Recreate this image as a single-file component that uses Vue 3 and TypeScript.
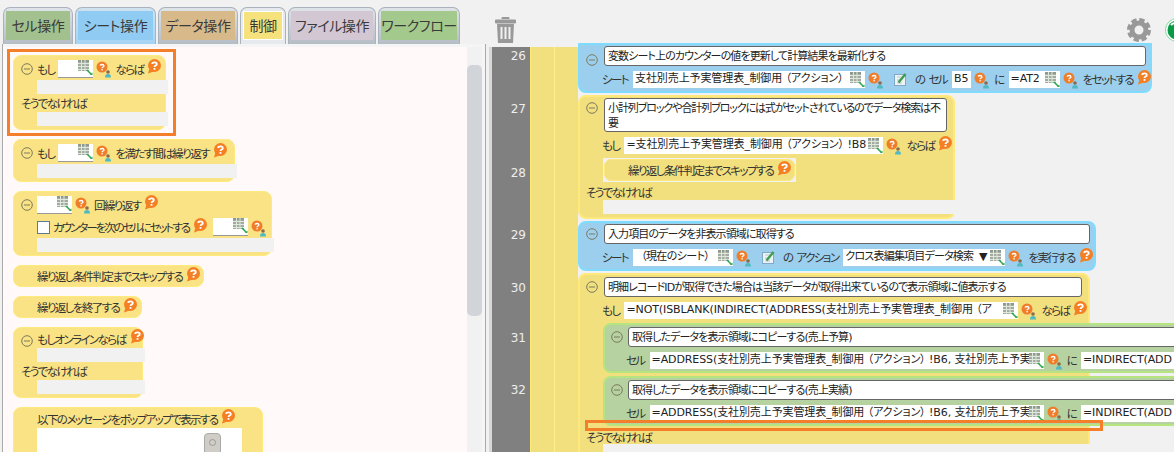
<script setup lang="ts">
const rows: { n: number; h: number }[] = [
  { n: 26, h: 53 },
  { n: 27, h: 64 },
  { n: 28, h: 62 },
  { n: 29, h: 53 },
  { n: 30, h: 50 },
  { n: 31, h: 52 },
  { n: 32, h: 80 },
];
</script>

<template>
  <div class="app">
    <svg class="defs" width="0" height="0" aria-hidden="true">
      <defs>
        <symbol id="grid" viewBox="0 0 15 16">
          <rect x="0" y="0" width="11" height="11" fill="#a3aaa0" />
          <rect x="0" y="0" width="11" height="2" fill="#8f9a8e" />
          <path d="M0 3.5h11M0 6.5h11M0 9.5h11M3.5 0v11M7 0v11" stroke="#dfe8dc" stroke-width="1" />
          <path d="M9 10l4.5 4.5" stroke="#2fa84f" stroke-width="1.6" />
          <path d="M14.5 12.5v2.5h-2.5z" fill="#2fa84f" />
        </symbol>
        <symbol id="q" viewBox="0 0 16 17">
          <circle cx="6" cy="6" r="5.5" fill="#f07d2a" />
          <path d="M4.2 4.6C4.3 3.2 7.9 3 7.9 4.9 7.9 6 6.1 6 6.1 7.2" fill="none" stroke="#fff" stroke-width="1.4" />
          <rect x="5.4" y="8.1" width="1.4" height="1.3" fill="#fff" />
          <circle cx="12" cy="11" r="1.8" fill="#8a6a4a" />
          <path d="M9 16.5c0-2.5 1-3.5 3-3.5s3 1 3 3.5z" fill="#4fb9c4" />
        </symbol>
        <symbol id="help" viewBox="0 0 14 15">
          <circle cx="7.5" cy="6.5" r="6.5" fill="#f47f24" />
          <path d="M1 14.5L3 8l5 4z" fill="#f47f24" />
          <path d="M5.2 5C5.3 3 9.8 2.8 9.8 5.2 9.8 6.6 7.5 6.6 7.5 8" fill="none" stroke="#fff" stroke-width="1.8" />
          <rect x="6.6" y="9" width="1.8" height="1.8" fill="#fff" />
        </symbol>
        <symbol id="minus" viewBox="0 0 12 12">
          <circle cx="6" cy="6" r="5.3" fill="none" stroke="#7d7a60" stroke-width="1" />
          <path d="M3 6h6" stroke="#7d7a60" stroke-width="1" />
        </symbol>
        <symbol id="check" viewBox="0 0 13 13">
          <rect x="0.5" y="1.5" width="11" height="11" fill="#eef3f6" stroke="#7fa8c9" />
          <path d="M3 4h5M3 7h3M3 10h5" stroke="#b9c7cf" stroke-width="1" />
          <path d="M4.5 9.5L11.5 1" fill="none" stroke="#3f9d50" stroke-width="2.4" />
        </symbol>
      </defs>
    </svg>

    <section class="left">
      <nav class="tabs">
        <div class="tab"><span class="face t-cell">セル操作</span></div>
        <div class="tab tab-blue"><span class="face t-sheet">シート操作</span></div>
        <div class="tab"><span class="face t-data">データ操作</span></div>
        <div class="tab tab-active"><span class="face t-ctrl">制御</span></div>
        <div class="tab"><span class="face t-file">ファイル操作</span></div>
        <div class="tab"><span class="face t-flow">ワークフロー</span></div>
      </nav>
      <div class="panel">
        <div class="palette">
          <div class="pb w153">
            <div class="pr">
              <svg class="tg"><use href="#minus" /></svg>
              <span>もし</span>
              <span class="pi"><svg class="gi"><use href="#grid" /></svg></span>
              <svg class="qi"><use href="#q" /></svg>
              <span>ならば</span>
              <svg class="hi"><use href="#help" /></svg>
            </div>
            <div class="strip"></div>
            <div class="else">そうでなければ</div>
            <div class="strip"></div>
          </div>
          <div class="pb w222">
            <div class="pr">
              <svg class="tg"><use href="#minus" /></svg>
              <span>もし</span>
              <span class="pi"><svg class="gi"><use href="#grid" /></svg></span>
              <svg class="qi"><use href="#q" /></svg>
              <span>を満たす間は繰り返す</span>
              <svg class="hi"><use href="#help" /></svg>
            </div>
            <div class="strip"></div>
          </div>
          <div class="pb w259">
            <div class="pr">
              <svg class="tg"><use href="#minus" /></svg>
              <span class="pi nom"><svg class="gi"><use href="#grid" /></svg></span>
              <svg class="qi"><use href="#q" /></svg>
              <span>回繰り返す</span>
              <svg class="hi"><use href="#help" /></svg>
            </div>
            <div class="pr pr2">
              <span class="box"></span>
              <span class="tight">カウンターを次のセルにセットする</span>
              <svg class="hi"><use href="#help" /></svg>
              <span class="pi nom"><svg class="gi"><use href="#grid" /></svg></span>
              <svg class="qi"><use href="#q" /></svg>
            </div>
            <div class="strip"></div>
          </div>
          <div class="pb w191 flat">
            <div class="pr"><span class="tgsp"></span><span>繰り返し条件判定までスキップする</span><svg class="hi"><use href="#help" /></svg></div>
          </div>
          <div class="pb w129 flat">
            <div class="pr"><span class="tgsp"></span><span>繰り返しを終了する</span><svg class="hi"><use href="#help" /></svg></div>
          </div>
          <div class="pb w130">
            <div class="pr short">
              <svg class="tg"><use href="#minus" /></svg>
              <span>もしオンラインならば</span>
              <svg class="hi"><use href="#help" /></svg>
            </div>
            <div class="strip"></div>
            <div class="else">そうでなければ</div>
            <div class="strip"></div>
          </div>
          <div class="pb w250 popup">
            <div class="pr short"><span class="tgsp"></span><span>以下のメッセージをポップアップで表示する</span><svg class="hi"><use href="#help" /></svg></div>
            <div class="msg"><span class="knob"><i></i></span></div>
          </div>
          <div class="mark-left"></div>
        </div>
        <div class="scroll"><div class="thumb"></div></div>
      </div>
    </section>

    <section class="right">
      <header class="toolbar">
        <svg class="trash" viewBox="0 0 21 27">
          <path d="M7 3V1.5h7V3M0.5 4h20v3H.5z" fill="#999" stroke="#999" />
          <path d="M2 8h17l-1 19H3z" fill="#999" />
          <path d="M6.5 11v12M10.5 11v12M14.5 11v12" stroke="#f1f1f1" stroke-width="2" />
        </svg>
        <svg class="gear" viewBox="0 0 24 24">
          <circle cx="12" cy="12" r="7" fill="none" stroke="#999" stroke-width="5" />
          <circle cx="12" cy="12" r="10" fill="none" stroke="#999" stroke-width="4" stroke-dasharray="5.2 2.65" />
        </svg>
        <svg class="status" viewBox="0 0 24 24">
          <circle cx="12" cy="12" r="11.5" fill="#fff" stroke="#7bdc9a" />
          <circle cx="12" cy="12" r="9.5" fill="#0a9a47" />
          <path d="M6 7c2-2 4-2 5-1" stroke="#fff" stroke-width="2" fill="none" />
        </svg>
      </header>
      <div class="canvas">
        <div class="gutter">
          <div v-for="r in rows" :key="r.n" class="ln" :style="{ height: r.h + 'px' }">{{ r.n }}</div>
        </div>
        <div class="rail"></div>
        <div class="rail rail2"></div>
        <div class="blocks">
          <div class="bk blue b26">
            <div class="hd">
              <svg class="tg"><use href="#minus" /></svg>
              <div class="ta w542">変数シート上のカウンターの値を更新して計算結果を最新化する</div>
            </div>
            <div class="rw">
              <span>シート</span>
              <span class="ip w232 m5"><b>支社別売上予実管理表_制御用 （アクション） </b><svg class="gi"><use href="#grid" /></svg></span>
              <svg class="qi"><use href="#q" /></svg>
              <svg class="ck"><use href="#check" /></svg>
              <span class="ml9">の</span>
              <span class="ml5">セル</span>
              <span class="ip w19 m5"><b>B5</b></span>
              <svg class="qi"><use href="#q" /></svg>
              <span>に</span>
              <span class="ip w51 m5"><b>=AT2</b><svg class="gi"><use href="#grid" /></svg></span>
              <svg class="qi"><use href="#q" /></svg>
              <span>をセットする</span>
              <svg class="hi"><use href="#help" /></svg>
            </div>
          </div>

          <div class="bk yellow b27">
            <div class="hd">
              <svg class="tg"><use href="#minus" /></svg>
              <div class="ta w343 tall">小計列ブロックや合計列ブロックには式がセットされているのでデータ検索は不要</div>
            </div>
            <div class="rw">
              <span>もし</span>
              <span class="ip w259 m5"><b>=支社別売上予実管理表_制御用 （アクション） !B8</b><svg class="gi"><use href="#grid" /></svg></span>
              <svg class="qi"><use href="#q" /></svg>
              <span>ならば</span>
              <svg class="hi"><use href="#help" /></svg>
            </div>
            <div class="inner"><div class="skip">繰り返し条件判定までスキップする<svg class="hi"><use href="#help" /></svg></div></div>
            <div class="else2">そうでなければ</div>
            <div class="strip2"></div>
          </div>

          <div class="bk blue b29">
            <div class="hd">
              <svg class="tg"><use href="#minus" /></svg>
              <div class="ta w486">入力項目のデータを非表示領域に取得する</div>
            </div>
            <div class="rw">
              <span>シート</span>
              <span class="ip w100 m5 cur"><b>（現在のシート）</b><svg class="gi"><use href="#grid" /></svg></span>
              <svg class="qi"><use href="#q" /></svg>
              <svg class="ck"><use href="#check" /></svg>
              <span class="ml9">の</span>
              <span class="ml5">アクション</span>
              <span class="ip w162 m5 sel"><b>クロス表編集項目データ検索</b><em>▼</em><svg class="gi"><use href="#grid" /></svg></span>
              <svg class="qi"><use href="#q" /></svg>
              <span>を実行する</span>
              <svg class="hi"><use href="#help" /></svg>
            </div>
          </div>

          <div class="bk yellow b30">
            <div class="hd">
              <svg class="tg"><use href="#minus" /></svg>
              <div class="ta w478">明細レコードIDが取得できた場合は当該データが取得出来ているので表示領域に値表示する</div>
            </div>
            <div class="rw">
              <span>もし</span>
              <span class="ip w394 m5"><b>=NOT(ISBLANK(INDIRECT(ADDRESS(支社別売上予実管理表_制御用 （ア</b><svg class="gi"><use href="#grid" /></svg></span>
              <svg class="qi"><use href="#q" /></svg>
              <span>ならば</span>
              <svg class="hi"><use href="#help" /></svg>
            </div>
            <div class="bk green">
              <div class="hd">
                <svg class="tg"><use href="#minus" /></svg>
                <div class="ta w560">取得したデータを表示領域にコピーする(売上予算)</div>
              </div>
              <div class="rw">
                <span>セル</span>
                <span class="ip w394 m5"><b>=ADDRESS(支社別売上予実管理表_制御用 （アクション） !B6, 支社別売上予実</b><svg class="gi"><use href="#grid" /></svg></span>
                <svg class="qi"><use href="#q" /></svg>
                <span>に</span>
                <span class="ip w200 m5"><b>=INDIRECT(ADD</b></span>
              </div>
            </div>
            <div class="bk green">
              <div class="hd">
                <svg class="tg"><use href="#minus" /></svg>
                <div class="ta w560">取得したデータを表示領域にコピーする(売上実績)</div>
              </div>
              <div class="rw">
                <span>セル</span>
                <span class="ip w394 m5"><b>=ADDRESS(支社別売上予実管理表_制御用 （アクション） !B6, 支社別売上予実</b><svg class="gi"><use href="#grid" /></svg></span>
                <svg class="qi"><use href="#q" /></svg>
                <span>に</span>
                <span class="ip w200 m5"><b>=INDIRECT(ADD</b></span>
              </div>
            </div>
            <div class="else3">そうでなければ</div>
            <div class="strip3"></div>
          </div>
        </div>
        <div class="mark-right"></div>
      </div>
    </section>
  </div>
</template>

<style>
html, body { margin: 0; background: #f1f1f1; }
</style>

<style scoped>
.app {
  width: 1174px;
  height: 452px;
  display: flex;
  overflow: hidden;
  background: #f1f1f1;
  color: #333;
  font-family: "Noto Sans CJK JP", "Noto Sans", sans-serif;
  font-size: 11.5px;
  letter-spacing: -1.6px;
  font-feature-settings: "palt";
  white-space: nowrap;
  line-height: 16px;
}
.defs { position: absolute; }

/* left */
.left { width: 486px; flex: none; display: flex; flex-direction: column; padding-top: 7px; box-sizing: border-box; }
.tabs { display: flex; gap: 2px; height: 37px; margin-left: 3px; }
.tab {
  padding: 3px 2px;
  border: 1px solid #aab2bc;
  border-bottom: 0;
  border-radius: 7px 7px 0 0;
  background: linear-gradient(#dfe4e9, #b5bdc6);
  display: flex;
  flex: none;
}
.tab-blue { background: linear-gradient(#cfe2f0, #a6d4f5); }
.tab-active { background: #e6eaee; }
.face { display: block; font-size: 14px; letter-spacing: -0.4px; line-height: 29px; height: 29px; text-align: center; color: #3a3a3a; }
.t-cell { width: 64px; background: #a2c18e; }
.t-sheet { width: 75px; background: #8fcbf3; }
.t-data { width: 74px; background: #d7b98a; }
.t-ctrl { width: 40px; background: #f6e27d; border: 1px solid #fff; line-height: 27px; box-sizing: border-box; }
.t-file { width: 82px; background: #d3c7d3; }
.t-flow { width: 76px; background: #a3c98c; }
.panel {
  flex: 1;
  display: flex;
  min-height: 0;
  margin-left: 2px;
  padding-top: 3px;
  border-left: 1px solid #aaa;
  border-right: 1px solid #aaa;
  background: #f5f5f5;
}
.palette {
  width: 464px;
  flex: none;
  position: relative;
  background: #fffaf9;
  padding: 8px 0 0 10px;
  box-sizing: border-box;
  overflow: hidden;
}
.scroll { width: 15px; background: #f1f1f1; margin-right: 3px; }
.thumb { width: 15px; height: 251px; margin-top: 18px; background: #d1d4d9; border-radius: 5px; }
.pb {
  background: #f9e384;
  border: 1px solid #ffea7e;
  border-radius: 8px;
  box-sizing: border-box;
  padding: 1px 0 3px 7px;
  margin-bottom: 9px;
}
.w153 { width: 153px; }
.w222 { width: 222px; }
.w259 { width: 259px; }
.w191 { width: 191px; }
.w129 { width: 129px; }
.w130 { width: 130px; }
.w250 { width: 250px; }
.flat { height: 22px; padding: 0 0 0 7px; }
.flat .pr { height: 20px; }
.pr { display: flex; align-items: center; height: 23px; }
.pr2 { margin-left: 16px; height: 22px; }
.short { height: 19px; }
.short .tg { margin-top: 5px; }
.tight { letter-spacing: -2px; }
.tg { width: 12px; height: 12px; flex: none; margin-right: 4px; }
.tgsp { width: 16px; flex: none; }
.pi {
  width: 35px;
  height: 18px;
  background: #fff;
  border-bottom: 1px solid #999;
  margin-left: 4px;
  display: flex;
  justify-content: flex-end;
  box-sizing: border-box;
  flex: none;
}
.pi.nom { margin-left: 0; }
.pr2 .pi.nom { margin-left: 6px; }
.gi { width: 15px; height: 16px; flex: none; margin-left: auto; }
.qi { width: 16px; height: 17px; flex: none; margin: 2px 4px 0 3px; }
.pr .qi { margin-right: 3px; }
.hi { width: 14px; height: 15px; flex: none; margin: -4px 0 0 4px; }
.strip { height: 14px; margin: 0 -3px 0 16px; background: #f1f1f1; }
.else { height: 18px; line-height: 18px; }
.box { width: 11px; height: 11px; background: #fff; border: 1px solid #5a7a9a; margin-right: 3px; flex: none; }
.popup { height: 70px; }
.msg { position: relative; width: 205px; height: 40px; margin: 0 0 0 16px; background: #fff; }
.knob { position: absolute; left: 167px; top: 5px; width: 15px; height: 30px; border: 1px solid #aaa; border-radius: 4px; background: #cfcdc6; }
.knob i { position: absolute; left: 4px; top: 5px; width: 5px; height: 5px; border: 1px solid #999; border-radius: 50%; }
.mark-left { position: absolute; left: 4px; top: 2px; width: 169px; height: 87px; box-sizing: border-box; border: 3px solid #f47f2a; }

/* right */
.right { flex: 1; min-width: 0; display: flex; flex-direction: column; overflow: hidden; padding-left: 2px; }
.toolbar { height: 47px; flex: none; display: flex; align-items: flex-start; padding-left: 7px; box-sizing: border-box; }
.trash { width: 21px; height: 27px; margin-top: 16px; flex: none; }
.gear { width: 24px; height: 24px; margin: 18px 0 0 611px; flex: none; }
.status { width: 24px; height: 24px; margin: 18px 0 0 14px; flex: none; }
.canvas { flex: 1; min-height: 0; display: flex; position: relative; margin-left: 1px; border-left: 3px solid #d8d8d8; }
.gutter { width: 38px; background: #808080; flex: none; }
.ln { text-align: right; color: #eee; font-family: "DejaVu Sans", sans-serif; letter-spacing: 0; font-size: 12px; line-height: 18px; padding-right: 4px; box-sizing: border-box; }
.rail { width: 24px; flex: none; box-sizing: border-box; background: #f2df7e; border-left: 1px solid #ffe97a; }
.rail2 { border-left: 1px solid #fff08f; }
.blocks { flex: 1; min-width: 0; }
.bk { border: 2px solid; border-radius: 8px; box-sizing: border-box; padding: 1px 0 0 6px; margin-bottom: 2px; }
.blue { background: #9ccfee; border-color: #7fdcff; }
.yellow { background: #f2df7e; border-color: #ffe97a; }
.green { background: #b5d2a0; border-color: #b5e480; margin: 3px 0 0 17px; padding-top: 2px; width: 600px; height: 50px; border-radius: 8px 0 0 8px; border-right: 0; }
.green .hd .tg { margin-right: 5px; }
.green .rw { margin-left: 15px; }
.b26 { width: 574px; margin-top: -4px; height: 50px; border-radius: 0 0 8px 8px; }
.b27 { width: 377px; height: 124px; }
.b29 { width: 518px; height: 50px; }
.b30 { width: 512px; height: 190px; padding-top: 2px; }
.hd { display: flex; align-items: flex-start; }
.hd .tg { margin: 4px 6px 0 0; }
.b26 .hd .tg { margin-top: 8px; }
.ta {
  height: 20px;
  background: #fff;
  border: 1px solid #666;
  border-radius: 3px;
  box-sizing: border-box;
  padding: 0 0 0 3px;
  line-height: 19px;
  font-family: "DejaVu Sans", "Noto Sans CJK JP", sans-serif;
  font-size: 11px;
  letter-spacing: -0.9px;
  color: #222;
  flex: none;
  overflow: hidden;
  white-space: normal;
}
.tall { height: 34px; line-height: 15px; padding-top: 2px; letter-spacing: -1.1px; }
.w542 { width: 542px; }
.w343 { width: 343px; }
.w486 { width: 486px; }
.w478 { width: 478px; }
.w560 { width: 560px; }
.rw { display: flex; align-items: center; height: 20px; margin: 3px 0 0 16px; }
.ip {
  height: 17px;
  background: #fff;
  display: flex;
  align-items: center;
  flex: none;
  overflow: hidden;
  color: #222;
  font-family: "DejaVu Sans", "Noto Sans CJK JP", sans-serif;
  font-size: 11px;
  letter-spacing: -0.1px;
  padding-left: 2px;
  box-sizing: border-box;
  white-space: pre;
}
.ip b { font-weight: 400; overflow: hidden; flex: 1; min-width: 0; }
.ip em { font-style: normal; font-size: 11px; margin-right: 3px; }
.ip .gi { margin-top: 1px; }
.cur { padding-left: 8px; letter-spacing: -0.6px; }
.sel b { letter-spacing: -0.8px; }
.m5 { margin-left: 5px; }
.ml9 { margin-left: 8px; }
.ml5 { margin-left: 4px; }
.w232 { width: 232px; }
.w19 { width: 19px; }
.w51 { width: 51px; }
.w100 { width: 100px; }
.w162 { width: 162px; }
.w394 { width: 394px; }
.w200 { width: 200px; }
.ck { width: 13px; height: 13px; flex: none; margin-left: 6px; }
.inner { width: 193px; height: 24px; margin: 3px 0 0 17px; background: #f1f1f1; padding: 1px; box-sizing: border-box; }
.skip {
  height: 22px;
  border: 1px solid #ffe97a;
  border-radius: 7px;
  background: #f2df7e;
  box-sizing: border-box;
  padding-left: 23px;
  display: flex;
  align-items: center;
}
.skip .hi { margin-top: -4px; }
.else2 { height: 17px; line-height: 18px; margin-top: 1px; }
.strip2 { height: 14px; margin: 0 -2px 0 17px; background: #f1f1f1; }
.else3 { height: 16px; line-height: 18px; margin-top: 2px; }
.strip3 { height: 14px; margin-left: 17px; width: 600px; background: #f1f1f1; }
.mark-right { position: absolute; left: 93px; top: 373px; width: 518px; height: 11px; box-sizing: border-box; border: 3px solid #f47f2a; }
</style>
